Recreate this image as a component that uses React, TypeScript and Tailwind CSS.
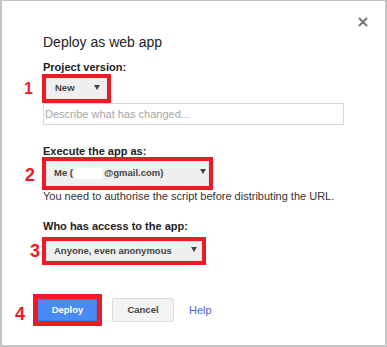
function Arrow({ className = "" }: { className?: string }) {
  return (
    <svg width="6" height="5" viewBox="0 0 6 5" className={className}>
      <path d="M0 0 L6 0 L3 5 Z" fill="#444" />
    </svg>
  );
}

export default function App() {
  return (
    <div className="w-[387px] h-[347px] bg-white border border-[#c4c4c4] border-l-2 border-r-2 border-b-2 font-['Liberation_Sans',Arial,sans-serif] text-[#222] flex flex-col">
      <div className="flex justify-end pt-[16px] pr-[17px]">
        <svg width="10" height="10" viewBox="0 0 10 10">
          <path d="M1 1 L9 9 M9 1 L1 9" stroke="#777" strokeWidth="2" />
        </svg>
      </div>

      <div className="flex flex-col pl-[41px]">
        <h1 className="mt-[7px] text-[14px] leading-[16px] text-[#222]">Deploy as web app</h1>

        <p className="mt-[11px] text-[11px] leading-[13px] font-bold">Project version:</p>
        <div className="flex items-center -ml-[19px]">
          <span className="text-[16px] font-bold text-[#ed1c24] w-[10px] leading-none">1</span>
          <div className="ml-[8px] w-[69px] h-[29px] border-4 border-[#ed1c24] bg-white">
            <div className="h-full bg-[#efefef] border border-[#e3e3e3] flex items-center justify-between pl-[8px] pr-[6px]">
              <span className="text-[9.5px] font-bold text-[#444]">New</span>
              <Arrow className="-mt-[2px]" />
            </div>
          </div>
        </div>
        <div className="w-[301px] h-[22px] border border-[#d9d9d9] flex items-center pl-[1px] text-[11px] text-[#a6a6a6]">
          Describe what has changed...
        </div>

        <p className="mt-[20px] text-[11px] leading-[12px] font-bold">Execute the app as:</p>
        <div className="flex items-center -ml-[18px]">
          <span className="text-[18px] font-bold text-[#ed1c24] w-[10px] leading-none mt-[3px]">2</span>
          <div className="ml-[7px] w-[171px] h-[33px] border-4 border-[#ed1c24]">
            <div className="h-full bg-[#efefef] border border-[#e3e3e3] flex items-center justify-between pl-[7px] pr-[2px]">
              <span className="text-[9.5px] font-bold text-[#444] flex items-center">
                Me (
                <span className="inline-block w-[29px] h-[11px] bg-white rounded-[3px] blur-[0.5px] mx-[1px]" />
                @gmail.com)
              </span>
              <Arrow className="-mt-[4px]" />
            </div>
          </div>
        </div>
        <p className="text-[11px] leading-[13px] text-[#333]">
          You need to authorise the script before distributing the URL.
        </p>

        <p className="mt-[17px] text-[11px] leading-[12px] font-bold">Who has access to the app:</p>
        <div className="flex items-center -ml-[13px] mt-[5px]">
          <span className="text-[18px] font-bold text-[#ed1c24] w-[10px] leading-none">3</span>
          <div className="ml-[2px] w-[164px] h-[28px] border-4 border-[#ed1c24]">
            <div className="h-full bg-[#efefef] border border-[#e3e3e3] flex items-center justify-between pl-[7px] pr-[4px]">
              <span className="text-[9.5px] font-bold text-[#444]">Anyone, even anonymous</span>
              <Arrow className="-mt-[3px]" />
            </div>
          </div>
        </div>

        <div className="flex items-center -ml-[28px] mt-[29px]">
          <span className="text-[18px] font-bold text-[#ed1c24] w-[10px] leading-none mt-[7px]">4</span>
          <div className="ml-[8px] w-[69px] h-[32px] border-[5px] border-[#ed1c24]">
            <div className="h-full bg-[#4a8af4] border border-[#3f7fe8] flex items-center justify-center text-[9.5px] font-bold text-white">
              Deploy
            </div>
          </div>
          <button className="ml-[10px] w-[62px] h-[24px] bg-[#f3f3f3] border border-[#dcdcdc] rounded-[2px] text-[9.5px] font-bold text-[#444]">
            Cancel
          </button>
          <span className="ml-[15px] text-[11px] text-[#4d63d6]">Help</span>
        </div>
      </div>
    </div>
  );
}
